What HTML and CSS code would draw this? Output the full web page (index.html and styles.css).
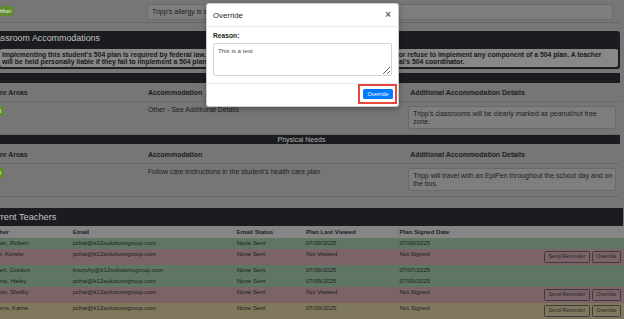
FILE: index.html
```html
<!DOCTYPE html>
<html lang="en">
<head>
<meta charset="utf-8">
<title>Student 504 Plan</title>
<link rel="stylesheet" href="styles.css">
</head>
<body>
<main class="page">
  <div class="top-row">
    <div class="area-cell"><span class="badge">Other</span></div>
    <div class="detail detail-wide">Tripp's allergy is severe and he must avoid all nuts during all school activities.</div>
  </div>

  <section class="accom">
    <div class="dark-block">
      <h2 class="card-title">Classroom Accommodations</h2>
      <div class="warning">Implementing this student's 504 plan is required by federal law. Teachers and other school staff may not deliberately ignor or refuse to implement any component of a 504 plan. A teacher<br>will be held personally liable if they fail to implement a 504 plan. Please direct any questions or concerns to the site principal's 504 coordinator.</div>
    </div>
    <table class="accom-table">
      <colgroup><col class="c-area"><col class="c-acc"><col class="c-det"></colgroup>
      <tbody>
        <tr class="cat"><th colspan="3">Food Allergy</th></tr>
        <tr class="head"><th>Care Areas</th><th>Accommodation</th><th>Additional Accommodation Details</th></tr>
        <tr class="item"><td><span class="badge">All</span></td><td>Other - See Additional Details</td><td><div class="detail">Tripp's classrooms will be clearly marked as peanut/nut free zone.</div></td></tr>
        <tr class="cat"><th colspan="3">Physical Needs</th></tr>
        <tr class="head"><th>Care Areas</th><th>Accommodation</th><th>Additional Accommodation Details</th></tr>
        <tr class="item"><td><span class="badge">All</span></td><td>Follow care instructions in the student's health care plan</td><td><div class="detail">Tripp will travel with an EpiPen throughout the school day and on the bus.</div></td></tr>
      </tbody>
    </table>
  </section>

  <section class="teachers">
    <h2 class="teachers-title">Current Teachers</h2>
    <table class="teachers-table">
      <colgroup><col class="t-name"><col class="t-email"><col class="t-status"><col class="t-viewed"><col class="t-signed"><col class="t-actions"></colgroup>
      <thead>
        <tr><th>Teacher</th><th>Email</th><th>Email Status</th><th>Plan Last Viewed</th><th>Plan Signed Date</th><th></th></tr>
      </thead>
      <tbody>
        <tr class="ok"><td>Morgan, Robert</td><td>pchai@k12solutionsgroup.com</td><td>None Sent</td><td>07/09/2025</td><td>07/09/2025</td><td class="actions"></td></tr>
        <tr class="bad"><td>Baker, Kenzie</td><td>pchai@k12solutionsgroup.com</td><td>None Sent</td><td>Not Viewed</td><td>Not Signed</td><td class="actions"><button class="btn-out">Send Reminder</button><button class="btn-out">Override</button></td></tr>
        <tr class="ok"><td>Herbert, Gordon</td><td>lmurphy@k12solutionsgroup.com</td><td>None Sent</td><td>07/09/2025</td><td>07/07/2025</td><td class="actions"></td></tr>
        <tr class="ok"><td>Roberts, Haley</td><td>pchai@k12solutionsgroup.com</td><td>None Sent</td><td>07/09/2025</td><td>07/09/2025</td><td class="actions"></td></tr>
        <tr class="bad"><td>Newton, Shelby</td><td>pchai@k12solutionsgroup.com</td><td>None Sent</td><td>Not Viewed</td><td>Not Signed</td><td class="actions"><button class="btn-out">Send Reminder</button><button class="btn-out">Override</button></td></tr>
        <tr class="warn"><td>Williams, Karrie</td><td>pchai@k12solutionsgroup.com</td><td>None Sent</td><td>07/09/2025</td><td>Not Signed</td><td class="actions"><button class="btn-out">Send Reminder</button><button class="btn-out">Override</button></td></tr>
      </tbody>
    </table>
  </section>
</main>

<div class="modal" role="dialog" aria-labelledby="ov-title">
  <div class="modal-header">
    <h3 class="modal-title" id="ov-title">Override</h3>
    <span class="close">&times;</span>
  </div>
  <div class="modal-body">
    <label class="reason-label" for="reason">Reason:</label>
    <textarea id="reason" class="reason">This is a test</textarea>
  </div>
  <div class="modal-footer">
    <span class="annot"><button class="btn-primary">Override</button></span>
  </div>
</div>
</body>
</html>
```
FILE: styles.css
```css
/* The page behind the dialog is painted in its dimmed (backdrop) tones. */
* { box-sizing: border-box; }
html, body { margin: 0; padding: 0; }
body {
  width: 624px;
  height: 319px;
  overflow: hidden;
  position: relative;
  background: #767676;
  font-family: "Liberation Sans", Arial, sans-serif;
  color: #1c1e20;
  font-size: 6.95px;
  line-height: 8.3px;
}

.page { margin-left: -17px; width: 641px; }

/* top row (end of previous card) */
.top-row {
  display: flex;
  align-items: flex-start;
  height: 23px;
  padding-top: 4px;
  border-bottom: 1px solid #686868;
  margin-right: 4px;
}
.area-cell { width: 164px; padding: 2px 0 0 10.7px; }
.badge {
  display: inline-block;
  background: #5f8a2e;
  color: #d3dccb;
  font-weight: bold;
  font-size: 5.5px;
  line-height: 6px;
  padding: 2px 3px;
  border-radius: 2px;
}
.detail {
  background: #7e7e7e;
  border: 1px solid #6a6a6a;
  border-radius: 2px;
  padding: 2.5px 0.5px 1.5px 4px;
}
.detail-wide { width: 466px; padding-top: 3px; padding-bottom: 3px; }

/* accommodations */
.accom { margin: 8px 4px 0 0; }
.dark-block {
  background: #1a1c1f;
  border-radius: 3px;
  padding: 2px 2px 1.5px;
}
.card-title {
  margin: 0 0 5px 2.5px;
  font-size: 8.9px;
  line-height: 11px;
  font-weight: normal;
  color: #c4c4c4;
}
.warning {
  margin-left: 15px;
  background: #888888;
  border-radius: 2px;
  padding: 1.5px 2px;
  font-weight: bold;
  font-size: 6.8px;
  line-height: 7.5px;
  white-space: nowrap;
  overflow: hidden;
  color: #18191b;
}

.accom-table {
  width: 100%;
  margin-top: 4.5px;
  border-collapse: collapse;
  table-layout: fixed;
}
.c-area { width: 156.7px; }
.c-acc { width: 262.3px; }
.accom-table .cat th {
  background: #1a1c1f;
  color: #b4b4b4;
  font-weight: normal;
  text-align: center;
  padding: 0;
  line-height: 9.5px;
}
.accom-table .head th {
  text-align: left;
  font-weight: bold;
  padding: 6.5px 4px 4px 8.2px;
  border-bottom: 1px solid #6a6a6a;
}
.accom-table .item td {
  vertical-align: top;
  padding: 4px 4px 5px 8.2px;
  border-bottom: 1px solid #6a6a6a;
}
.accom-table .item .detail { margin-left: -2px; }

/* teachers */
.teachers { margin-top: 11px; }
.teachers-title {
  margin: 0 1px 0 0;
  background: #1a1c1f;
  color: #c4c4c4;
  font-size: 9.2px;
  line-height: 12px;
  padding: 3px 3px;
  font-weight: normal;
}
.teachers-table {
  width: 100%;
  border-collapse: collapse;
  table-layout: fixed;
  font-size: 6.1px;
  line-height: 8px;
}
.t-name { width: 86.7px; }
.t-email { width: 164px; }
.t-status { width: 69.3px; }
.t-viewed { width: 93.5px; }
.t-signed { width: 103.5px; }
.teachers-table th {
  background: #858585;
  text-align: left;
  font-weight: bold;
  padding: 2px 3px;
  white-space: nowrap;
}
.teachers-table td {
  vertical-align: top;
  padding: 1.5px 3px;
  white-space: nowrap;
}
.teachers-table td.actions { text-align: right; padding: 2px 3px 2px; }
.ok { background: #5f7665; }
.bad { background: #7b6367; }
.warn { background: #80785c; }
.btn-out {
  display: inline-block;
  margin-left: 2px;
  font-family: inherit;
  font-size: 5.3px;
  line-height: 7px;
  padding: 1.5px 3.5px;
  border: 1px solid #3a3d40;
  border-radius: 1.5px;
  background: transparent;
  color: #25282b;
}

/* modal dialog */
.modal {
  position: absolute;
  left: 206px;
  top: 3px;
  width: 193px;
  background: #fff;
  border: 1px solid rgba(0, 0, 0, 0.2);
  border-radius: 3px;
  box-shadow: 0 2px 6px rgba(0, 0, 0, 0.3);
  z-index: 10;
}
.modal-header {
  display: flex;
  align-items: center;
  justify-content: space-between;
  height: 23px;
  padding: 0 7px 0 6px;
  border-bottom: 1px solid #e9ecef;
}
.modal-title {
  margin: 0;
  font-size: 7.8px;
  line-height: 9px;
  font-weight: normal;
  color: #212529;
}
.close {
  font-size: 10px;
  line-height: 10px;
  font-weight: bold;
  color: #666;
}
.modal-body { padding: 5px 6px 7px; }
.reason-label {
  display: block;
  font-weight: bold;
  font-size: 6.7px;
  line-height: 8px;
  margin-bottom: 3px;
}
.reason {
  display: block;
  width: 100%;
  height: 33px;
  margin: 0;
  font-family: inherit;
  font-size: 6.2px;
  line-height: 8.4px;
  padding: 2.5px 4px;
  border: 1px solid #ced4da;
  border-radius: 2px;
  color: #495057;
}
.modal-footer {
  display: flex;
  justify-content: flex-end;
  padding: 0 1.5px 2px;
  border-top: 1px solid #e9ecef;
}
.annot {
  display: flex;
  border: 2px solid #e5483c;
  padding: 3px 2px 3px 3px;
}
.btn-primary {
  display: block;
  height: 10px;
  font-family: inherit;
  font-size: 5.5px;
  line-height: 6px;
  padding: 2px 4px;
  border: 0;
  border-radius: 1.5px;
  background: #007bff;
  color: #fff;
}
```
